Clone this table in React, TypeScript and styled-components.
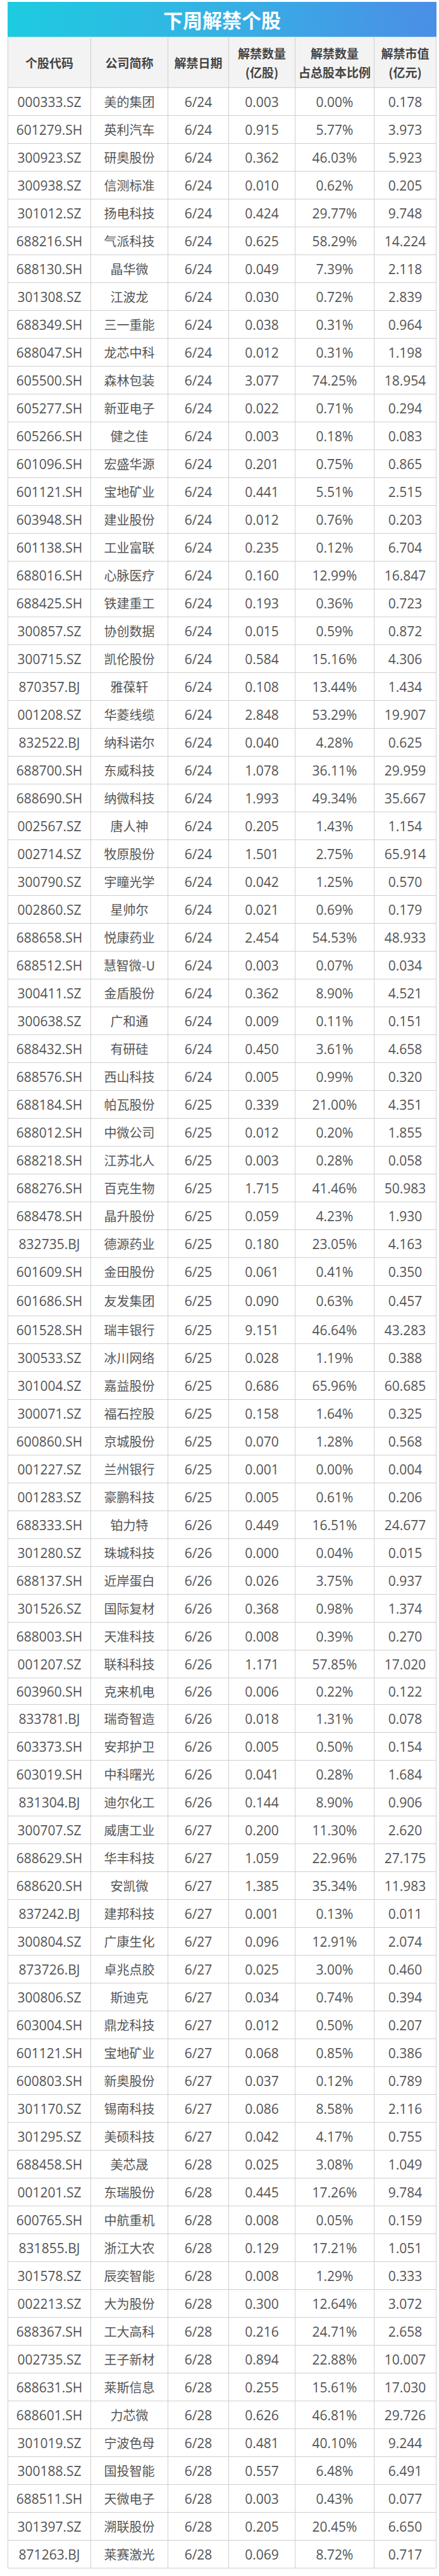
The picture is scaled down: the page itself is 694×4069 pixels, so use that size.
import React from "react";
import styled, { createGlobalStyle } from "styled-components";

const GlobalStyle = createGlobalStyle`
    body {
        margin: 0;
        background: #ffffff;
        font-family: "Open Sans", "Noto Sans CJK SC", sans-serif;
    }
`;

type Row = [string, string, string, string, string, string];

const rows: Row[] = [
    ["000333.SZ", "美的集团", "6/24", "0.003", "0.00%", "0.178"],
    ["601279.SH", "英利汽车", "6/24", "0.915", "5.77%", "3.973"],
    ["300923.SZ", "研奥股份", "6/24", "0.362", "46.03%", "5.923"],
    ["300938.SZ", "信测标准", "6/24", "0.010", "0.62%", "0.205"],
    ["301012.SZ", "扬电科技", "6/24", "0.424", "29.77%", "9.748"],
    ["688216.SH", "气派科技", "6/24", "0.625", "58.29%", "14.224"],
    ["688130.SH", "晶华微", "6/24", "0.049", "7.39%", "2.118"],
    ["301308.SZ", "江波龙", "6/24", "0.030", "0.72%", "2.839"],
    ["688349.SH", "三一重能", "6/24", "0.038", "0.31%", "0.964"],
    ["688047.SH", "龙芯中科", "6/24", "0.012", "0.31%", "1.198"],
    ["605500.SH", "森林包装", "6/24", "3.077", "74.25%", "18.954"],
    ["605277.SH", "新亚电子", "6/24", "0.022", "0.71%", "0.294"],
    ["605266.SH", "健之佳", "6/24", "0.003", "0.18%", "0.083"],
    ["601096.SH", "宏盛华源", "6/24", "0.201", "0.75%", "0.865"],
    ["601121.SH", "宝地矿业", "6/24", "0.441", "5.51%", "2.515"],
    ["603948.SH", "建业股份", "6/24", "0.012", "0.76%", "0.203"],
    ["601138.SH", "工业富联", "6/24", "0.235", "0.12%", "6.704"],
    ["688016.SH", "心脉医疗", "6/24", "0.160", "12.99%", "16.847"],
    ["688425.SH", "铁建重工", "6/24", "0.193", "0.36%", "0.723"],
    ["300857.SZ", "协创数据", "6/24", "0.015", "0.59%", "0.872"],
    ["300715.SZ", "凯伦股份", "6/24", "0.584", "15.16%", "4.306"],
    ["870357.BJ", "雅葆轩", "6/24", "0.108", "13.44%", "1.434"],
    ["001208.SZ", "华菱线缆", "6/24", "2.848", "53.29%", "19.907"],
    ["832522.BJ", "纳科诺尔", "6/24", "0.040", "4.28%", "0.625"],
    ["688700.SH", "东威科技", "6/24", "1.078", "36.11%", "29.959"],
    ["688690.SH", "纳微科技", "6/24", "1.993", "49.34%", "35.667"],
    ["002567.SZ", "唐人神", "6/24", "0.205", "1.43%", "1.154"],
    ["002714.SZ", "牧原股份", "6/24", "1.501", "2.75%", "65.914"],
    ["300790.SZ", "宇瞳光学", "6/24", "0.042", "1.25%", "0.570"],
    ["002860.SZ", "星帅尔", "6/24", "0.021", "0.69%", "0.179"],
    ["688658.SH", "悦康药业", "6/24", "2.454", "54.53%", "48.933"],
    ["688512.SH", "慧智微-U", "6/24", "0.003", "0.07%", "0.034"],
    ["300411.SZ", "金盾股份", "6/24", "0.362", "8.90%", "4.521"],
    ["300638.SZ", "广和通", "6/24", "0.009", "0.11%", "0.151"],
    ["688432.SH", "有研硅", "6/24", "0.450", "3.61%", "4.658"],
    ["688576.SH", "西山科技", "6/24", "0.005", "0.99%", "0.320"],
    ["688184.SH", "帕瓦股份", "6/25", "0.339", "21.00%", "4.351"],
    ["688012.SH", "中微公司", "6/25", "0.012", "0.20%", "1.855"],
    ["688218.SH", "江苏北人", "6/25", "0.003", "0.28%", "0.058"],
    ["688276.SH", "百克生物", "6/25", "1.715", "41.46%", "50.983"],
    ["688478.SH", "晶升股份", "6/25", "0.059", "4.23%", "1.930"],
    ["832735.BJ", "德源药业", "6/25", "0.180", "23.05%", "4.163"],
    ["601609.SH", "金田股份", "6/25", "0.061", "0.41%", "0.350"],
    ["601686.SH", "友发集团", "6/25", "0.090", "0.63%", "0.457"],
    ["601528.SH", "瑞丰银行", "6/25", "9.151", "46.64%", "43.283"],
    ["300533.SZ", "冰川网络", "6/25", "0.028", "1.19%", "0.388"],
    ["301004.SZ", "嘉益股份", "6/25", "0.686", "65.96%", "60.685"],
    ["300071.SZ", "福石控股", "6/25", "0.158", "1.64%", "0.325"],
    ["600860.SH", "京城股份", "6/25", "0.070", "1.28%", "0.568"],
    ["001227.SZ", "兰州银行", "6/25", "0.001", "0.00%", "0.004"],
    ["001283.SZ", "豪鹏科技", "6/25", "0.005", "0.61%", "0.206"],
    ["688333.SH", "铂力特", "6/26", "0.449", "16.51%", "24.677"],
    ["301280.SZ", "珠城科技", "6/26", "0.000", "0.04%", "0.015"],
    ["688137.SH", "近岸蛋白", "6/26", "0.026", "3.75%", "0.937"],
    ["301526.SZ", "国际复材", "6/26", "0.368", "0.98%", "1.374"],
    ["688003.SH", "天准科技", "6/26", "0.008", "0.39%", "0.270"],
    ["001207.SZ", "联科科技", "6/26", "1.171", "57.85%", "17.020"],
    ["603960.SH", "克来机电", "6/26", "0.006", "0.22%", "0.122"],
    ["833781.BJ", "瑞奇智造", "6/26", "0.018", "1.31%", "0.078"],
    ["603373.SH", "安邦护卫", "6/26", "0.005", "0.50%", "0.154"],
    ["603019.SH", "中科曙光", "6/26", "0.041", "0.28%", "1.684"],
    ["831304.BJ", "迪尔化工", "6/26", "0.144", "8.90%", "0.906"],
    ["300707.SZ", "威唐工业", "6/27", "0.200", "11.30%", "2.620"],
    ["688629.SH", "华丰科技", "6/27", "1.059", "22.96%", "27.175"],
    ["688620.SH", "安凯微", "6/27", "1.385", "35.34%", "11.983"],
    ["837242.BJ", "建邦科技", "6/27", "0.001", "0.13%", "0.011"],
    ["300804.SZ", "广康生化", "6/27", "0.096", "12.91%", "2.074"],
    ["873726.BJ", "卓兆点胶", "6/27", "0.025", "3.00%", "0.460"],
    ["300806.SZ", "斯迪克", "6/27", "0.034", "0.74%", "0.394"],
    ["603004.SH", "鼎龙科技", "6/27", "0.012", "0.50%", "0.207"],
    ["601121.SH", "宝地矿业", "6/27", "0.068", "0.85%", "0.386"],
    ["600803.SH", "新奥股份", "6/27", "0.037", "0.12%", "0.789"],
    ["301170.SZ", "锡南科技", "6/27", "0.086", "8.58%", "2.116"],
    ["301295.SZ", "美硕科技", "6/27", "0.042", "4.17%", "0.755"],
    ["688458.SH", "美芯晟", "6/28", "0.025", "3.08%", "1.049"],
    ["001201.SZ", "东瑞股份", "6/28", "0.445", "17.26%", "9.784"],
    ["600765.SH", "中航重机", "6/28", "0.008", "0.05%", "0.159"],
    ["831855.BJ", "浙江大农", "6/28", "0.129", "17.21%", "1.051"],
    ["301578.SZ", "辰奕智能", "6/28", "0.008", "1.29%", "0.333"],
    ["002213.SZ", "大为股份", "6/28", "0.300", "12.64%", "3.072"],
    ["688367.SH", "工大高科", "6/28", "0.216", "24.71%", "2.658"],
    ["002735.SZ", "王子新材", "6/28", "0.894", "22.88%", "10.007"],
    ["688631.SH", "莱斯信息", "6/28", "0.255", "15.61%", "17.030"],
    ["688601.SH", "力芯微", "6/28", "0.626", "46.81%", "29.726"],
    ["301019.SZ", "宁波色母", "6/28", "0.481", "40.10%", "9.244"],
    ["300188.SZ", "国投智能", "6/28", "0.557", "6.48%", "6.491"],
    ["688511.SH", "天微电子", "6/28", "0.003", "0.43%", "0.077"],
    ["301397.SZ", "溯联股份", "6/28", "0.205", "20.45%", "6.650"],
    ["871263.BJ", "莱赛激光", "6/28", "0.069", "8.72%", "0.717"],
];

// a couple of rows in the screenshot are not the standard height
const rowHeights: Record<number, number> = { 43: 48, 57: 42 };

const headers: string[][] = [
    ["个股代码"],
    ["公司简称"],
    ["解禁日期"],
    ["解禁数量", "(亿股)"],
    ["解禁数量", "占总股本比例"],
    ["解禁市值", "(亿元)"],
];

const COLUMNS = "131px 122px 96px 105px 125px 98px";

const Page = styled.div`
    padding: 3px 0 11px 12px;
    width: 678px;
`;

const TitleBar = styled.div`
    height: 55px;
    display: flex;
    align-items: center;
    justify-content: center;
    background: linear-gradient(90deg, #1dcbe0 0%, #33b4e4 45%, #4b8ee6 100%);
    color: #ffffff;
    font-family: "Noto Sans CJK SC", sans-serif;
    font-weight: 700;
    font-size: 31px;
    letter-spacing: 0;
    border-bottom: 1px solid #bfe3f2;
`;

const Grid = styled.div`
    border-left: 1px solid #cfcfcf;
`;

const HeaderRow = styled.div`
    display: grid;
    grid-template-columns: ${COLUMNS};
    height: 80px;
    background: #f3f3f3;
`;

const HeaderCell = styled.div`
    display: flex;
    flex-direction: column;
    align-items: center;
    justify-content: center;
    border-right: 1px solid #cfcfcf;
    border-bottom: 1px solid #cfcfcf;
    color: #444444;
    font-family: "Noto Sans CJK SC", sans-serif;
    font-weight: 700;
    font-size: 19px;
    line-height: 30px;
    white-space: nowrap;
`;

const DataRow = styled.div<{ $h: number }>`
    display: grid;
    grid-template-columns: ${COLUMNS};
    height: ${(p) => p.$h}px;
`;

const Cell = styled.div<{ $cjk?: boolean }>`
    display: flex;
    align-items: center;
    justify-content: center;
    border-right: 1px solid #cfcfcf;
    border-bottom: 1px solid #cfcfcf;
    color: #555555;
    font-family: ${(p) =>
        p.$cjk ? `"Noto Sans CJK SC", sans-serif` : `"Open Sans", "Noto Sans CJK SC", sans-serif`};
    font-size: ${(p) => (p.$cjk ? "20px" : "21px")};
    white-space: nowrap;
`;

const App: React.FC = () => {
    return <Page>
        <GlobalStyle/>
        <TitleBar>下周解禁个股</TitleBar>
        <Grid>
            <HeaderRow>
                {headers.map((lines, i) => (
                    <HeaderCell key={i}>
                        {lines.map((l) => <span key={l}>{l}</span>)}
                    </HeaderCell>
                ))}
            </HeaderRow>
            {rows.map((r, i) => (
                <DataRow key={i} $h={rowHeights[i] ?? 44}>
                    {r.map((v, j) => (
                        <Cell key={j} $cjk={j === 1}>{v}</Cell>
                    ))}
                </DataRow>
            ))}
        </Grid>
    </Page>
}

export default App;
